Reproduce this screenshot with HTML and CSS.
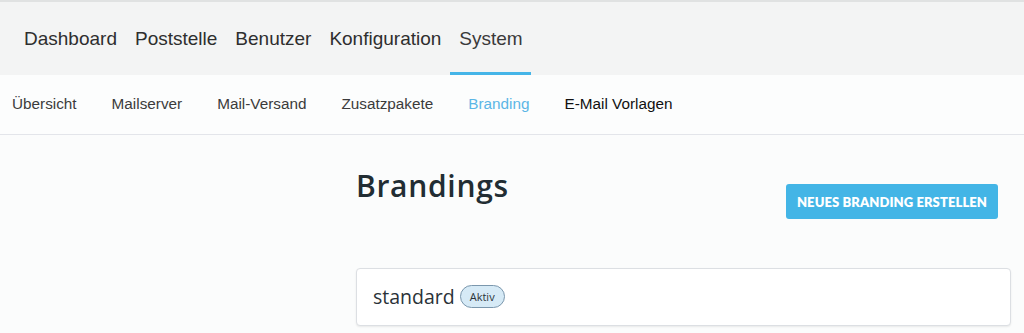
FILE: index.html
```html
<!DOCTYPE html>
<html lang="de">
<head>
<meta charset="utf-8">
<title>Brandings</title>
<link rel="stylesheet" href="styles.css">
</head>
<body>
<header class="topnav">
  <nav class="topnav-items">
    <a class="topnav-item">Dashboard</a>
    <a class="topnav-item">Poststelle</a>
    <a class="topnav-item">Benutzer</a>
    <a class="topnav-item">Konfiguration</a>
    <a class="topnav-item active">System</a>
  </nav>
</header>
<nav class="subnav">
  <a class="subnav-item">Übersicht</a>
  <a class="subnav-item">Mailserver</a>
  <a class="subnav-item">Mail-Versand</a>
  <a class="subnav-item">Zusatzpakete</a>
  <a class="subnav-item active">Branding</a>
  <a class="subnav-item dark">E-Mail Vorlagen</a>
</nav>
<main class="layout">
  <aside class="sidebar"></aside>
  <section class="content">
    <div class="content-head">
      <h1 class="title">Brandings</h1>
      <button class="btn-primary">NEUES BRANDING ERSTELLEN</button>
    </div>
    <div class="card">
      <span class="card-name">standard</span>
      <span class="badge">Aktiv</span>
    </div>
  </section>
</main>
</body>
</html>
```
FILE: styles.css
```css
* { box-sizing: border-box; }
html, body { margin: 0; padding: 0; }
body {
  background: #fbfcfc;
  font-family: "Liberation Sans", Arial, sans-serif;
  height: 333px;
  overflow: hidden;
}
.topnav {
  background: #f3f4f4;
  border-top: 2px solid #e0e2e2;
  height: 75px;
}
.topnav-items {
  display: flex;
  padding-left: 15px;
  height: 100%;
}
.topnav-item {
  display: flex;
  align-items: center;
  padding: 3px 9px 0;
  font-size: 19px;
  color: #2e2e2e;
  border-bottom: 3px solid transparent;
  height: 73px;
}
.topnav-item.active {
  color: #3a3a3a;
  border-bottom-color: #45b5e8;
  padding-right: 8px;
}
.subnav {
  display: flex;
  align-items: center;
  gap: 35px;
  padding-left: 12px;
  height: 60px;
  background: #fcfdfd;
  border-bottom: 1px solid #e3e5ea;
}
.subnav-item {
  font-size: 15.3px;
  color: #3b3b3b;
  padding-bottom: 1px;
}
.subnav-item.active { color: #5bb6e6; }
.subnav-item.dark { color: #111; }
.layout {
  display: grid;
  grid-template-columns: 356px 1fr;
}
.content {
  padding: 32px 13px 0 0;
}
.content-head {
  display: flex;
  justify-content: space-between;
  align-items: flex-start;
  padding-right: 13px;
}
.title {
  margin: 0;
  padding-left: 0;
  font-family: "Open Sans", sans-serif;
  font-weight: 600;
  font-size: 30px;
  letter-spacing: 0.7px;
  line-height: 38px;
  color: #222d33;
}
.btn-primary {
  margin-top: 17px;
  width: 212px;
  height: 35px;
  border: 0;
  border-radius: 3px;
  background: #43b5e6;
  color: #fff;
  font-family: Lato, sans-serif;
  font-weight: 800;
  font-size: 13px;
  letter-spacing: 0.1px;
  padding: 0;
}
.card {
  margin-top: 49px;
  height: 58px;
  background: #fff;
  border: 1px solid #dcdfe3;
  border-radius: 4px;
  box-shadow: 0 1px 2px rgba(0,0,0,0.08);
  display: flex;
  align-items: center;
  padding: 0 0 2px 16px;
  gap: 5px;
}
.card-name {
  font-family: "Open Sans", sans-serif;
  font-size: 19.5px;
  color: #2a3238;
}
.badge {
  font-family: "Open Sans", sans-serif;
  font-size: 11px;
  color: #2a3238;
  background: #d6eaf6;
  border: 1px solid #7b97ad;
  border-radius: 12px;
  padding: 4px 9px;
  line-height: 13px;
}
```
